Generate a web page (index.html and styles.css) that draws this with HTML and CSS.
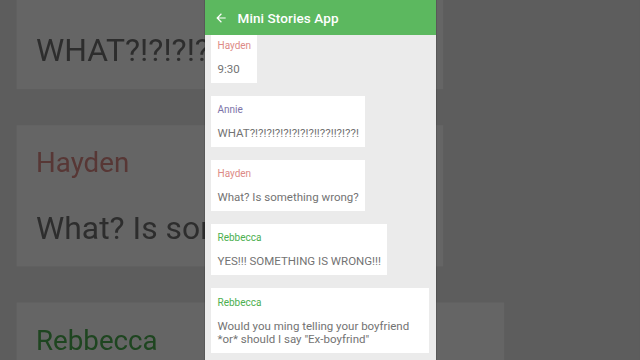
FILE: index.html
```html
<!DOCTYPE html>
<html>
<head>
<meta charset="utf-8">
<link rel="stylesheet" href="styles.css">
</head>
<body>
<div class="backdrop" aria-hidden="true">
  <div class="screen screen-copy">
    <div class="appbar">
      <span class="appbar-title">Mini Stories App</span>
    </div>
    <div class="thread">
      <div class="thread-inner">
        <div class="bubble"><div class="who hayden">Hayden</div><div class="msg">9:30</div></div>
        <div class="bubble"><div class="who annie">Annie</div><div class="msg">WHAT?!?!?!?!?!?!?!?!!??!!?!??!</div></div>
        <div class="bubble"><div class="who hayden">Hayden</div><div class="msg">What? Is something wrong?</div></div>
        <div class="bubble"><div class="who rebbecca">Rebbecca</div><div class="msg">YES!!! SOMETHING IS WRONG!!!</div></div>
        <div class="bubble"><div class="who rebbecca">Rebbecca</div><div class="msg">Would you ming telling your boyfriend *or* should I say "Ex-boyfrind"</div></div>
      </div>
    </div>
  </div>
</div>

<main class="stage">
  <div class="screen">
    <header class="appbar">
      <svg class="back" viewBox="0 0 24 24" width="14" height="14"><path d="M20 11H7.83l5.59-5.59L12 4l-8 8 8 8 1.41-1.41L7.83 13H20v-2z" fill="#ffffff"/></svg>
      <span class="appbar-title">Mini Stories App</span>
    </header>
    <div class="thread">
      <div class="thread-inner">
        <div class="bubble"><div class="who hayden">Hayden</div><div class="msg">9:30</div></div>
        <div class="bubble"><div class="who annie">Annie</div><div class="msg">WHAT?!?!?!?!?!?!?!?!!??!!?!??!</div></div>
        <div class="bubble"><div class="who hayden">Hayden</div><div class="msg">What? Is something wrong?</div></div>
        <div class="bubble"><div class="who rebbecca">Rebbecca</div><div class="msg">YES!!! SOMETHING IS WRONG!!!</div></div>
        <div class="bubble"><div class="who rebbecca">Rebbecca</div><div class="msg">Would you ming telling your boyfriend *or* should I say "Ex-boyfrind"</div></div>
      </div>
    </div>
  </div>
</main>
</body>
</html>
```

FILE: styles.css
```css
* { box-sizing: border-box; }

html, body {
  margin: 0;
  padding: 0;
  width: 640px;
  height: 360px;
  overflow: hidden;
  background: #5d5d5d;
  font-family: Roboto, "Noto Sans", "Liberation Sans", sans-serif;
}

.backdrop {
  position: absolute;
  left: 0;
  top: 0;
  width: 640px;
  height: 360px;
  overflow: hidden;
  z-index: 0;
}

.screen-copy {
  transform-origin: 0 0;
  transform: translateY(-318px) scale(2.77);
  filter: brightness(0.395) blur(0.25px);
}

.stage {
  position: relative;
  z-index: 1;
  display: flex;
  justify-content: center;
  height: 360px;
}

.screen {
  width: 231px;
  height: 360px;
  background: #ebebeb;
  display: flex;
  flex-direction: column;
}

.stage .screen {
  box-shadow: 0 0 0 1px rgba(0,0,0,0.12);
}

.appbar {
  flex: 0 0 35px;
  height: 35px;
  background: #5cb85f;
  display: flex;
  align-items: center;
  padding-left: 9px;
  position: relative;
  z-index: 2;
}

.screen-copy .appbar { padding-left: 33px; }

.back {
  display: block;
  margin-right: 10px;
}

.appbar-title {
  color: #ffffff;
  font-size: 13.5px;
  font-weight: 500;
  letter-spacing: 0.1px;
}

.thread {
  flex: 1;
  overflow: hidden;
}

.thread-inner {
  margin-top: -3px;
  display: flex;
  flex-direction: column;
  align-items: flex-start;
}

.bubble {
  background: #ffffff;
  margin: 0 0 13px 6px;
  max-width: 218px;
  padding: 7px 6px 7px 7px;
}

.bubble:last-child { padding-top: 8px; }

.who {
  font-size: 10px;
  line-height: 14px;
}

.hayden { color: #dd8a86; }
.annie { color: #7d74a8; }
.rebbecca { color: #4caf50; }

.msg {
  margin-top: 10px;
  font-size: 11.5px;
  line-height: 13px;
  color: #737373;
}
```
